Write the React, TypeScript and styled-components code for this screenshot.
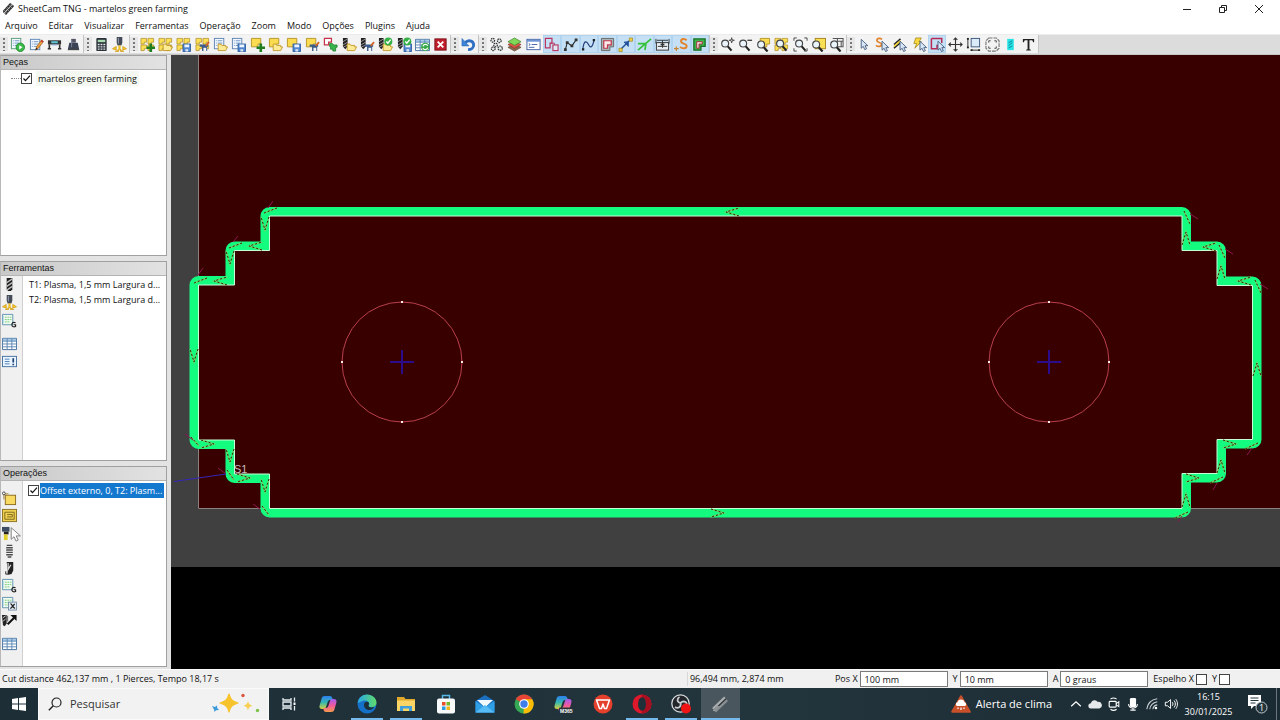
import React from 'react';
import styled, { createGlobalStyle, css } from 'styled-components';

const UI = '"Open Sans", "Noto Sans", sans-serif';

const GlobalStyle = createGlobalStyle`
  *, *::before, *::after { box-sizing: border-box; }
  body { margin: 0; background: #f0f0f0; }
  button, input { font: inherit; color: inherit; margin: 0; padding: 0; border: 0; border-radius: 0; background: none; }
`;

/* ---------- page frame ---------- */

const Page = styled.div`
  min-height: 100vh;
  display: flex;
  flex-direction: column;
  font: 9px/14px ${UI};
  color: #111;
  background: #f0f0f0;
`;

const TitleBar = styled.header`
  height: 18px;
  display: flex;
  align-items: center;
  gap: 4px;
  padding: 0 3px 0 3px;
  background: #fff;
`;

const AppTitle = styled.h1`
  flex: 1;
  margin: 0;
  font: inherit;
`;

const WindowButtons = styled.div`
  display: flex;
`;

const WindowButton = styled.button`
  width: 36px;
  height: 18px;
  display: grid;
  place-items: center;
  svg { width: 10px; height: 10px; }
`;

const MenuBar = styled.nav`
  height: 16px;
  display: flex;
  align-items: center;
  background: #fff;
`;

const MenuItem = styled.button`
  padding: 0 6px 0 5px;
`;

const ToolBar = styled.div`
  height: 21px;
  display: flex;
  padding-bottom: 1px;
  background: #dcdcdc;
  border-top: 1px solid #ececec;
  border-bottom: 1px solid #c8c8c8;
`;

const ToolGroup = styled.div<{ $width: number }>`
  width: ${p => p.$width}px;
  display: flex;
  background: #f3f3f3;
  border-right: 1px solid #c4c4c4;
`;

const Grip = styled.span`
  flex: none;
  width: 8px;
  margin: 2px 0;
  background: radial-gradient(circle at 4px 2px, #777 1px, transparent 1px) 0 0 / 8px 4px #e6e6e6;
`;

const ToolButtons = styled.div`
  flex: 1;
  display: grid;
  grid-auto-flow: column;
  grid-auto-columns: 1fr;
`;

const ToolButton = styled.button<{ $on?: boolean }>`
  position: relative;
  display: grid;
  place-items: center;
  min-width: 0;
  min-height: 0;
  svg { width: 15px; height: 15px; }
  ${p => p.$on && css`background: #c5e0f5; box-shadow: inset 0 0 0 1px #b0d4f0;`}
`;

/* ---------- work area ---------- */

const Main = styled.main`
  flex: 1;
  display: grid;
  grid-template-columns: 167px minmax(0, 1fr);
  gap: 4px;
  background: #e3e3e3;
`;

const Side = styled.aside`
  min-width: 0;
  display: grid;
  grid-template-columns: minmax(0, 1fr);
  grid-template-rows: repeat(3, minmax(0, 1fr));
  gap: 5px;
  padding-bottom: 2px;
`;

const Panel = styled.section`
  display: flex;
  flex-direction: column;
  border: 1px solid #a0a0a0;
  border-left-color: #b8b8b8;
  background: #fff;
`;

const PanelTitle = styled.h2`
  margin: 0;
  padding-left: 2px;
  height: 14px;
  font: 9px/12px "Liberation Sans", Arial, sans-serif;
  color: #111;
  background: linear-gradient(90deg, #c9c9c9, #e2e2e2);
  border-bottom: 1px solid #b4b4b4;
`;

const PanelBody = styled.div`
  flex: 1;
  display: flex;
`;

const Strip = styled.div<{ $top?: number }>`
  flex: none;
  width: 22px;
  padding: ${p => p.$top ?? 0}px 4px 0 0;
  background: #f0f0f0;
  border-right: 1px solid #d0d0d0;
`;

const StripGroup = styled.div<{ $height: number }>`
  height: ${p => p.$height}px;
  display: grid;
  grid-auto-rows: 1fr;
  margin-bottom: 5px;
`;

const List = styled.ul`
  flex: 1;
  min-width: 0;
  margin: 0;
  padding: 1px 2px 0 5px;
  list-style: none;
`;

const ListItem = styled.li`
  height: 15px;
  padding-left: 1px;
  line-height: 15px;
  white-space: nowrap;
`;

const CheckRow = styled.label<{ $indent: number }>`
  display: flex;
  align-items: center;
  height: 15px;
  margin-top: 1px;
  padding-left: ${p => p.$indent}px;
  white-space: nowrap;
`;

const Branch = styled.span`
  width: 10px;
  border-top: 1px dotted #888;
`;

const Check = styled.input.attrs({ type: 'checkbox' })`
  appearance: none;
  flex: none;
  width: 11px;
  height: 11px;
  border: 1px solid #444;
  background: #fff;
`;

const Ticked = styled.span`
  position: relative;
  display: grid;
  svg { position: absolute; inset: 0; width: 11px; height: 11px; pointer-events: none; }
  input:not(:checked) + svg { display: none; }
`;

const RowText = styled.span<{ $selected?: boolean }>`
  height: 15px;
  line-height: 15px;
  padding: 0 2px;
  margin-left: ${p => (p.$selected ? 1 : 4)}px;
  ${p => p.$selected
    ? css`flex: 1; padding: 0; color: #fff; background: #1478cf;`
    : css`background: #f4f8f0;`}
`;

const Pointer = styled.svg`
  position: absolute;
  left: 8px;
  top: 3px;
  z-index: 1;
`;

const Drawing = styled.svg`
  display: block;
  width: 100%;
  height: 100%;
  min-height: 500px;
  background: #000;
`;

const Stage = styled.div`
  display: grid;
  min-width: 0;
  background: #000;
`;

/* ---------- status bar ---------- */

const StatusBar = styled.div`
  height: 19px;
  display: flex;
  align-items: center;
  padding: 0 42px 0 2px;
  border-top: 1px solid #fafafa;
  background: #f0f0f0;
`;

const StatusText = styled.span`
  flex: 1;
`;

const Coordinates = styled.span`
  width: 148px;
  padding-left: 2px;
  border-left: 1px solid #d8d8d8;
`;

const Field = styled.label<{ $gap: number }>`
  display: flex;
  align-items: center;
  gap: 2px;
  margin-right: ${p => p.$gap}px;
`;

const FieldInput = styled.input`
  width: 88px;
  height: 16px;
  padding: 0 4px;
  border: 1px solid #7a7a7a;
  background: #fff;
`;

/* ---------- task bar ---------- */

const TaskBar = styled.footer`
  height: 32px;
  display: flex;
  color: #fff;
  background: linear-gradient(90deg, #1d2e37, #22343c 60%, #1b2b33);
`;

const StartButton = styled.button`
  width: 38px;
  display: grid;
  place-items: center;
`;

const Search = styled.label`
  width: 231px;
  display: flex;
  align-items: center;
  gap: 8px;
  padding: 0 8px 0 9px;
  background: #f2f2f2;
  border: 1px solid #fafafa;
`;

const SearchInput = styled.input`
  flex: 1;
  min-width: 0;
  font: 11px/16px ${UI};
  color: #333;
  outline: none;
  &::placeholder { color: #333; opacity: 1; }
`;

const Apps = styled.div`
  width: 471px;
  display: grid;
  grid-auto-flow: column;
  grid-auto-columns: 1fr;
`;

const AppButton = styled.button<{ $state?: 'open' | 'active' }>`
  display: grid;
  place-items: center;
  svg { width: 20px; height: 20px; }
  ${p => p.$state === 'open' && css`background: linear-gradient(#76b9ed, #76b9ed) center bottom / 32px 2px no-repeat;`}
  ${p => p.$state === 'active' && css`background: linear-gradient(#76b9ed, #76b9ed) center bottom / 100% 2px no-repeat #49565d;`}
`;

const Tray = styled.div`
  margin-left: auto;
  display: flex;
  align-items: center;
  padding-right: 3px;
`;

const Weather = styled.button`
  display: flex;
  align-items: center;
  gap: 5px;
  margin-right: 14px;
  font: 11px/16px ${UI};
  white-space: nowrap;
`;

const TrayButton = styled.button`
  width: 19px;
  height: 32px;
  display: grid;
  place-items: center;
  svg { width: 14px; height: 14px; }
`;

const Clock = styled.time`
  width: 57px;
  text-align: center;
  font: 9px/15px ${UI};
`;

const Notices = styled.button`
  width: 40px;
  height: 32px;
  display: grid;
  place-items: center;
  border-right: 1px solid #6a767c;
`;

/* ---------- icon pieces, on a 16 x 16 grid ---------- */

const Icon = ({ children }: { children: React.ReactNode }) => (
  <svg viewBox="0 0 16 16" fill="none" aria-hidden="true">{children}</svg>
);

const Sheet = ({ x = 1, y = 1, c = '#5f86b5' }) => (
  <g transform={`translate(${x} ${y})`}>
    <rect x=".5" y=".5" width="10" height="11" fill="#f4f9ff" stroke={c} />
    <path d="M2 3h1M4 3h5M2 5.500h1M4 5.500h5M2 8h1M4 8h5" stroke="#6c94c4" />
  </g>
);
const Part = ({ x = 1, y = 1 }) => (
  <path transform={`translate(${x} ${y})`} d="M.5.5h10v6h-3v3h-7z" fill="#fbdc50" stroke="#b08c1c" strokeWidth=".9" />
);
const Nest = () => (
  <g fill="#fbdf55" stroke="#a8841c" strokeWidth=".7">
    <path d="M1 1.500h6v4h-2.500v2h-3.500zM8.500 1.500h6v4h-2.500v2h-3.500zM1 8.500h6v4h-2.500v2h-3.500zM8.500 8.500h6v4h-2.500v2h-3.500z" />
  </g>
);
const Folder = () => <path d="M5.500 14.500v-7h3l1 1.500h4v1.500h2l-2 4z" fill="#fdea94" stroke="#c0921e" strokeWidth=".9" />;
const Disk = () => (
  <g><rect x="7.500" y="7.500" width="8" height="8" fill="#4f86cf" stroke="#2a5a9f" strokeWidth=".9" /><path d="M9 8h5v3H9z" fill="#eef5ff" /><path d="M10 13h3v2.500h-3z" fill="#dbe5f2" /></g>
);
const Pencil = () => (
  <g><path d="M7 14l1-3.500L13.500 3l2 1.700L10 12z" fill="#f0a03c" stroke="#8d5a24" strokeWidth=".7" /><path d="M7 14l.7-2.500 1.500 1.200z" fill="#222" /><path d="M12.800 3.800l2 1.700" stroke="#c33" strokeWidth="1.500" /></g>
);
const Dark = () => (
  <g><path d="M5 8h9v2.500H5zM7.500 10h5.500v5H7.500z" fill="#3b5c8a" /><path d="M9 11.500h3V15H9z" fill="#f2f4f8" /><path d="M11.500 9.500l3.500-4" stroke="#d4662a" strokeWidth="2" /></g>
);
const Plus = () => <path d="M11.500 7v9M7 11.500h9" stroke="#1f7d1f" strokeWidth="2.800" />;
const Tick = () => (
  <g><circle cx="11" cy="4.800" r="4.300" fill="#35b045" /><path d="M8.800 4.800l1.700 1.700L13.500 2.800" stroke="#fff" strokeWidth="1.500" /></g>
);
const Drill = ({ x = 1 }) => (
  <g transform={`translate(${x} 0)`}><path d="M0 1h5v9l-2.500 3L0 10z" fill="#222" /><path d="M0 5l5-3M0 8.500l5-3M0 11l5-2.500" stroke="#b8b8b8" strokeWidth=".8" /></g>
);
const Arrow = ({ x = 6, y = 4, fill = '#d9e6f7' }) => (
  <path transform={`translate(${x} ${y})`} d="M.5.5v9.500l2.200-2 1.600 3.500 1.900-.9-1.600-3.300h3z" fill={fill} stroke="#3c5678" strokeWidth=".9" />
);
const Lens = ({ x = 0, y = 0 }) => (
  <g transform={`translate(${x} ${y})`}><circle cx="5.500" cy="6" r="3.700" fill="#eaf4fb" stroke="#444" strokeWidth="1.200" /><path d="M8.300 9l4 4.500" stroke="#222" strokeWidth="2.300" /></g>
);
const Grid = () => (
  <g><path d="M.5 2.500h15v12H.5z" fill="#fff" stroke="#44709f" /><path d="M1 3h14v2.500H1z" fill="#a9cbea" /><path d="M.5 5.500h15M.5 8.500h15M.5 11.500h15M5.500 2.500v12M10.500 2.500v12" stroke="#5b86b3" /></g>
);
const Code = () => (
  <g><path d="M.5 1.500h11v11H.5z" fill="#eefbee" stroke="#5f93b0" /><path d="M3 4.500h7M3 7h7M3 9.500h5" stroke="#7cc97f" strokeDasharray="2 .8" /><path d="M1 3v8" stroke="#7cb0d6" /></g>
);

const icons: Record<string, React.ReactNode> = {
  run: <><Sheet x={1} y={1} c="#5b9d78" /><circle cx="11" cy="11" r="4.500" fill="#3dbb4a" stroke="#248c34" /><path d="M9.800 8.800l3.500 2.200-3.500 2.200z" fill="#fff" /></>,
  edit: <><Sheet x={1} y={2} /><Pencil /></>,
  machine: <><path d="M1 3.500h14v4.500H1z" fill="#333" /><path d="M4.500 4.500h7v2.200h-7z" fill="#5bc6d8" /><path d="M2.500 8v4.500M13.500 8v4.500M.8 12.500h3.500M11.700 12.500h3.500" stroke="#333" strokeWidth="1.700" /><path d="M5 8.500h6" stroke="#8ad" /></>,
  post: <><path d="M5.500 2h5v4h-5z" fill="#556" /><path d="M3.500 6h9l1.500 7h-12z" fill="#3a4254" /><path d="M6 3v8" stroke="#7c88a0" /><path d="M2 13.500h12" stroke="#222" /></>,
  calc: <><rect x="2.500" y="1" width="11" height="14" rx="1" fill="#2b3138" /><path d="M4 3h8v2.500H4z" fill="#a8dcb0" /><path d="M4 8h2M7 8h2M10 8h2M4 10.500h2M7 10.500h2M10 10.500h2M4 13h2M7 13h2M10 13h2" stroke="#dfe4e8" strokeWidth="1.400" /></>,
  torch: <><path d="M5 0h6v6l-1 3H6L5 6z" fill="#444b58" /><path d="M6.800 1v6" stroke="#9aa3b2" /><path d="M6.800 9h2.400v5H6.800z" fill="#f0c020" /><path d="M.5 12.500l4-2.500v4zM15.500 12.500l-4-2.500v4zM3.500 15.500l3.500-2v2zM12.500 15.500l-3.500-2v2z" fill="#f5c62a" stroke="#d09c18" strokeWidth=".8" /></>,
  nestAdd: <><Nest /><Plus /></>,
  nestOpen: <><Nest /><Folder /></>,
  nestSave: <><Nest /><Disk /></>,
  nestEdit: <><Nest /><Dark /></>,
  listOpen: <><Sheet /><Folder /></>,
  listSave: <><Sheet /><Disk /></>,
  partAdd: <><Part /><Plus /></>,
  partOpen: <><Part /><Folder /></>,
  partSave: <><Part /><Disk /></>,
  partEdit: <><Part /><Dark /></>,
  partImport: <><path d="M1 1.500h8v4H6v3H1.500v-7" fill="#fff" stroke="#c5324a" strokeWidth="1.300" /><path d="M7 7h3l1.500 1.500H15V11h-1.500v4h-3v-2H8v-3H7z" fill="#38b54a" stroke="#1d7f2c" strokeWidth=".8" /></>,
  toolOpen: <><Drill /><Folder /></>,
  toolEdit: <><Drill /><Dark /></>,
  toolCheckOpen: <><Drill /><Folder /><Tick /></>,
  toolCheckSave: <><Drill /><Disk /><Tick /></>,
  refresh: <><Grid /><circle cx="11" cy="10.500" r="4.500" fill="#35a845" /><path d="M8.500 10a2.600 2.600 0 015-.5M13.500 11.300a2.600 2.600 0 01-5 .5" stroke="#fff" strokeWidth="1.200" /></>,
  remove: <><rect x="2" y="2" width="12" height="12" fill="#c01f2b" stroke="#7c1018" /><path d="M5 5l6 6M11 5l-6 6" stroke="#fff" strokeWidth="2" /></>,
  undo: <><path d="M4 5.500h1C9 2.500 13.500 4.500 13.500 8.500c0 3-2.500 5-6 5" stroke="#2e6fc4" strokeWidth="3" /><path d="M1 1.500v8h7.500z" fill="#3f83d6" stroke="#2765b8" strokeWidth=".6" /></>,
  gears: <g stroke="#333" strokeWidth="1.300" fill="#dfe6ea"><circle cx="4" cy="3.500" r="2" strokeDasharray="1.500 .7" /><circle cx="11" cy="4" r="2" strokeDasharray="1.500 .7" /><circle cx="7" cy="8.500" r="2" strokeDasharray="1.500 .7" /><circle cx="4.500" cy="12.500" r="2" strokeDasharray="1.500 .7" /><circle cx="12" cy="12" r="2.300" strokeDasharray="1.500 .7" /></g>,
  layers: <><path d="M1 11l7-3 7 3-7 4z" fill="#8a6a4a" stroke="#54402c" strokeWidth=".7" /><path d="M1 8l7-3 7 3-7 4z" fill="#e0574a" stroke="#8d2d24" strokeWidth=".7" /><path d="M1 5l7-4 7 4-7 4z" fill="#7fd956" stroke="#377b22" strokeWidth=".7" /></>,
  console: <><rect x="1" y="2.500" width="14" height="11" fill="#fff" stroke="#3e62a5" /><path d="M1 4h14" stroke="#6d94d4" strokeWidth="2" /><path d="M3 7l1.500 1L3 9M6 8h6M3 11h6" stroke="#3e62a5" /></>,
  shapes: <><path d="M1.500 1.500h7v5h-2v5h-5z" stroke="#b9355f" strokeWidth="1.300" /><path d="M7 6.500h4V9" stroke="#b9355f" /><rect x="9.500" y="8.500" width="5.500" height="6" fill="#dfe9f6" stroke="#b9355f" strokeWidth="1.200" /></>,
  nodes: <><path d="M2.500 13.500L4.500 6l5 3.500L14 3" stroke="#222" strokeWidth="1.100" /><path d="M1 12h3v3H1zM3 4.500h3v3H3zM8 8h3v3H8zM12.500 1.500h3v3h-3z" fill="#333" /></>,
  curve: <><path d="M2 13C3 3 6 4 8 8s4 4 6-5" stroke="#24407c" strokeWidth="1.300" /><path d="M1 12h2.500v2.500H1zM12.500 2H15v2.500h-2.500z" fill="#222" /></>,
  outline: <><path d="M1.500 1.500h13v9h-4v4h-9z" fill="#a6b4b4" stroke="#666" /><path d="M4 4h8v4.500H8V12H4z" fill="#fbe9ec" stroke="#c1374c" strokeWidth="1.300" /></>,
  vector: <><path d="M3 13L12 4" stroke="#24539a" strokeWidth="1.600" /><path d="M6.500 5.500L11 10V5z" fill="#24539a" stroke="#24539a" /><path d="M1 12h3.500v3.500H1zM12 1h3.500v3.500H12z" fill="#f2cf3f" stroke="#8d7416" strokeWidth=".6" /></>,
  ray: <path d="M1 14L15 2M1 7h8.500l-1 7" stroke="#35c23a" strokeWidth="1.800" />,
  dims: <><rect x="1.500" y="6" width="13" height="8" fill="#e8eef4" stroke="#333" /><path d="M1 2v5M15 2v5M2 3.500h12M3 10h10M8 3.500v8" stroke="#333" /><path d="M6 7h4v2H6z" fill="#333" /></>,
  start: <><path d="M13.500 3.500C11 1 7.500 2 7.500 4.500c0 3 6 2 6 5 0 3-4.500 3.500-7 1" stroke="#e2842c" strokeWidth="2.100" /><path d="M0 12.500h5M2.500 10v5" stroke="#c98432" strokeWidth="1.300" /></>,
  kerf: <><path d="M2 2h12v8H9.500v4H2z" fill="#3db54a" stroke="#156f22" strokeWidth="1.400" /><path d="M5 5h6v2.500H7.500V12H5z" fill="#f6dfe0" stroke="#a32c3c" /></>,
  zoomIn: <><Lens y={1} /><path d="M12.500 .5v6M9.500 3.500h6" stroke="#333" strokeWidth="1.100" /><path d="M11.500 2.500h2v2h-2z" fill="#fff" stroke="#333" strokeWidth=".7" /></>,
  zoomOut: <><Lens y={1} /><path d="M10 3.500h5" stroke="#333" strokeWidth="1.300" /></>,
  zoomPart: <><Part x={4} y={1} /><Lens y={2} /></>,
  zoomNest: <><Nest /><Lens x={1} y={1} /></>,
  zoomFit: <><Lens x={1} y={1} /><path d="M1 4V1h3M12 1h3v3M1 12v3h3M15 12v3h-3" stroke="#444" /></>,
  zoomSheet: <><rect x="4.500" y="1.500" width="11" height="11" fill="#f9df55" stroke="#a5851c" /><Lens y={2} /></>,
  zoomMachine: <><path d="M4 1.500h11v9H9M4 4.500h11M9 1v5M13 5v6" stroke="#555" strokeWidth="1.100" /><Lens y={2} /></>,
  select: <Arrow x={4} y={2} />,
  selectStart: <><path d="M7.500 2.500C5 .5 2 1.500 2 3.800c0 2.500 5 1.700 5 4.200 0 2.400-4 2.600-6 .9" stroke="#e2842c" strokeWidth="1.900" /><Arrow x={7} y={4} /></>,
  selectPath: <><path d="M1 8l7-6M1 12l7-6" stroke="#222" strokeWidth="1.600" /><path d="M1 10l7-6" stroke="#f1d32d" strokeWidth="1.600" /><Arrow x={7} y={4} /></>,
  selectRapid: <><path d="M4 1h6L7.500 5H10l-7 7 2-5H2z" fill="#f7d93d" stroke="#a3841a" strokeWidth=".8" /><Arrow x={8} y={4} /></>,
  selectContour: <><path d="M1.500 1.500h11v5M1.500 1.500v11h6V9H9" stroke="#b62a55" strokeWidth="1.600" /><Arrow x={8} y={4} /></>,
  move: <path d="M8 1v14M1 8h14M6 3l2-2 2 2M6 13l2 2 2-2M3 6L1 8l2 2M13 6l2 2-2 2" stroke="#333" strokeWidth="1.200" />,
  scale: <><rect x="5.500" y="1.500" width="9" height="9" fill="#dcebfa" stroke="#3c587e" /><path d="M2 1v11M5 14h9" stroke="#222" /><path d="M1 1h2v2H1zM1 10h2v2H1zM5 13h2v2H5zM13 13h2v2h-2z" fill="#222" /></>,
  clamp: <><path d="M4 1h8l3 3v8l-3 3H4l-3-3V4z" stroke="#777" strokeWidth="1.200" strokeDasharray="4 1" /><path d="M4 6V4h2M10 4h2v2M12 10v2h-2M6 12H4v-2" stroke="#444" /></>,
  highlight: <><path d="M4.500 2h7v12h-7z" fill="#27e5e5" /><path d="M6 6l4-2M6 9l4-3M6 11.500l4-2" stroke="#0c7f95" /></>,
  text: <path d="M2 2h12v3.500h-1L12 3.500H9V13l1.500.5v1h-5v-1L7 13V3.500H4L3 5.500H2z" fill="#222" />,
  mill: <><path d="M5 1h6v12l-1.500 2h-3L5 13z" fill="#1f1f1f" /><path d="M5 6l6-4M5 10l6-4M5 14l6-4" stroke="#bfbfbf" strokeWidth="1.400" /></>,
  code: <><Code /><path d="M14.500 10.500c-3-1.500-4 .5-4 2s1.500 3 4 2v-2h-2" stroke="#222" strokeWidth="1.200" /></>,
  table: <Grid />,
  notes: <><rect x=".5" y="2.500" width="15" height="11" fill="#e9f4ff" stroke="#44709f" /><path d="M3 5.500h5M3 8h5M3 10.500h5" stroke="#4d7fb5" /><path d="M12 4.500v4.500M12 10.500v1.500" stroke="#1c3d72" strokeWidth="1.800" /></>,
  contour: <><rect x="3.500" y="4.500" width="11" height="10" fill="#f8da62" stroke="#8a6a1e" /><path d="M2 3v6M2 3h5" stroke="#a08030" /><circle cx="2" cy="2.500" r="1.500" fill="#fff" stroke="#444" /></>,
  pocket: <><rect x=".5" y="1.500" width="15" height="13" fill="#f0d050" stroke="#8b7323" /><path d="M3 4.500h10v7.500H3V4.500M5.500 7h5.500v2.500H5.500" stroke="#7c6720" strokeWidth="1" /></>,
  plasma: <><path d="M0 1h8v5H0z" fill="#3d4c63" /><path d="M2 6h5v3H2z" fill="#222" /><path d="M2 9h4v6H2z" fill="#e5cf2a" /></>,
  thread: <path d="M5 2.500h6M4.500 5h7M4.500 7.500h7M4.500 10h7M4.500 12.500h7M6 15h4" stroke="#4a4a4a" strokeWidth="1.500" />,
  bore: <><path d="M5 1h7v9l-2 4H6V10z" fill="#222" /><path d="M6.500 2v7l3-5" stroke="#ddd" strokeWidth="1.300" /><path d="M4 11v3h4" stroke="#222" /></>,
  variable: <><Code /><rect x="7" y="6.500" width="8.500" height="8.500" fill="#e4edf6" stroke="#5f7a94" strokeWidth=".8" /><path d="M9 8.500c2-.5 2.500 5 5 4.500M13.500 8.500L9 13.500" stroke="#222" strokeWidth="1.300" /></>,
  toolMove: <><path d="M0 2h5v9l-2 3-2-1z" fill="#222" /><path d="M1 5l3-2M1 9l3-3" stroke="#ddd" /><path d="M6 12l7-7" stroke="#111" strokeWidth="2.200" /><path d="M9 2h6.500v6.500z" fill="#111" /><path d="M6 3v6" stroke="#555" /></>,
};

type Tool = [icon: string, label: string, on?: boolean];

const toolGroups: { width: number; tools: Tool[] }[] = [
  { width: 84, tools: [['run', 'Executar'], ['edit', 'Editar código'], ['machine', 'Máquina'], ['post', 'Pós-processador']] },
  { width: 46, tools: [['calc', 'Calculadora'], ['torch', 'Tocha']] },
  { width: 321, tools: [
    ['nestAdd', 'Novo trabalho'], ['nestOpen', 'Abrir trabalho'], ['nestSave', 'Salvar trabalho'], ['nestEdit', 'Salvar trabalho como'],
    ['listOpen', 'Abrir operações'], ['listSave', 'Salvar operações'], ['partAdd', 'Nova peça'], ['partOpen', 'Abrir peça'],
    ['partSave', 'Salvar peça'], ['partEdit', 'Salvar peça como'], ['partImport', 'Importar desenho'], ['toolOpen', 'Abrir ferramentas'],
    ['toolEdit', 'Salvar ferramentas'], ['toolCheckOpen', 'Abrir conjunto'], ['toolCheckSave', 'Salvar conjunto'], ['refresh', 'Atualizar'], ['remove', 'Excluir'],
  ] },
  { width: 28, tools: [['undo', 'Desfazer']] },
  { width: 231, tools: [
    ['gears', 'Opções'], ['layers', 'Camadas'], ['console', 'Console'], ['shapes', 'Mostrar peças', true], ['nodes', 'Mostrar nós', true],
    ['curve', 'Mostrar curvas', true], ['outline', 'Mostrar contorno', true], ['vector', 'Mostrar segmentos', true], ['ray', 'Mostrar direção', true],
    ['dims', 'Mostrar máquina', true], ['start', 'Mostrar inícios', true], ['kerf', 'Mostrar largura de corte', true],
  ] },
  { width: 137, tools: [['zoomIn', 'Aproximar'], ['zoomOut', 'Afastar'], ['zoomPart', 'Zoom na peça'], ['zoomNest', 'Zoom no trabalho'], ['zoomFit', 'Ajustar'], ['zoomSheet', 'Zoom no material'], ['zoomMachine', 'Zoom na máquina']] },
  { width: 192, tools: [['select', 'Selecionar'], ['selectStart', 'Ponto inicial'], ['selectPath', 'Editar caminho'], ['selectRapid', 'Editar rápidos'], ['selectContour', 'Editar contornos', true], ['move', 'Mover'], ['scale', 'Escalar'], ['clamp', 'Grampos'], ['highlight', 'Realçar'], ['text', 'Texto']] },
];

const menus = ['Arquivo', 'Editar', 'Visualizar', 'Ferramentas', 'Operação', 'Zoom', 'Modo', 'Opções', 'Plugins', 'Ajuda'];

const Tools = ({ items }: { items: Tool[] }) => (
  <>
    {items.map(([icon, label, on]) => (
      <ToolButton key={icon + label} aria-label={label} aria-pressed={on} $on={on}>
        <Icon>{icons[icon]}</Icon>
        {icon === 'plasma' && (
          <Pointer viewBox="0 0 12 15" aria-hidden="true">
            <path d="M.7.7v11.600l2.800-2.600 2 4.400 2.200-1-2-4.200h4.200z" fill="#fff" stroke="#777" strokeWidth=".9" />
          </Pointer>
        )}
      </ToolButton>
    ))}
  </>
);

const TickBox = () => (
  <Ticked>
    <Check defaultChecked />
    <svg viewBox="0 0 11 11" fill="none" aria-hidden="true"><path d="M2.500 5.500l2 2.200L9 2.700" stroke="#111" strokeWidth="1.200" /></svg>
  </Ticked>
);

/* ---------- cutting view ---------- */

const OUTLINE =
  'M269.500 216V250.500H234.500V285H198.500V440H234.500V474H269.500V508.500H1182V473.500H1217V439.500H1252.500V285.500H1217V250.500H1182V216Z';

/* travel arrows: tip position and heading in degrees (0 = right) */
const arrows: [number, number, number][] = [
  [726, 212, 180], [249, 246, 180], [214, 281, 180], [265, 230, 90], [230, 264, 90], [194, 362, 90],
  [214, 444, 0], [250, 478, 0], [724, 513, 0], [230, 462, 90], [265, 492, 90],
  [1186, 232, -90], [1203, 247, 180], [1221, 266, -90], [1238, 281, 180], [1257, 363, -90],
  [1236, 444, 0], [1221, 460, -90], [1199, 478, 0], [1186, 494, -90],
];

/* short dashes that follow the rounding of each outer corner */
const cornerDashes = [
  'M264 213l13-5', 'M229 248l13-5', 'M194 283l13-5', 'M1184 211l6 13', 'M1219 245l6 13', 'M1255 280l6 13',
  'M1258 443l-13 6', 'M1223 477l-13 6', 'M1188 512l-13 6', 'M191 437l8 9', 'M227 470l7 10', 'M262 506l7 9',
];

/* lead ticks at the outer corners */
const ticks = [
  'M268 208l5-7', 'M233 242l5-6', 'M198 275l5-7', 'M1190 214l8 5', 'M1225 249l8 5', 'M1260 284l8 5',
  'M1252 448l-5 7', 'M1217 483l-4 7', 'M1182 516l-4 6', 'M193 440l-8-6', 'M226 474l-8-6', 'M260 509l-7-5',
];

const CutView = () => (
  <Drawing viewBox="171 55 1109 614" preserveAspectRatio="xMinYMin slice" role="img" aria-label="Caminho de corte">
    <rect x="171" y="55" width="1109" height="512" fill="#404040" />
    <rect x="198" y="55" width="1082" height="454" fill="#390000" />
    <path d="M198.500 55V508.500H1280" fill="none" stroke="#8c8080" />
    <path d={OUTLINE} fill="#390000" stroke="#14fc80" strokeWidth="18" strokeLinejoin="round" />
    <path d={OUTLINE} fill="#390000" stroke="#c8ffd8" />
    <g fill="none" stroke="#b4b048" strokeWidth="1.400">
      {arrows.map(([x, y, a]) => <path key={`${x}-${y}`} transform={`translate(${x} ${y}) rotate(${a})`} d="M-13-4L0 0-13 4" opacity=".6" />)}
      <path d={cornerDashes.join('')} opacity=".6" />
    </g>
    <g fill="none" stroke="#2a2a14" strokeDasharray="2 2">
      {arrows.map(([x, y, a]) => <path key={`${x}-${y}`} transform={`translate(${x} ${y}) rotate(${a})`} d="M-13-4L0 0-13 4" />)}
      <path d={cornerDashes.join('')} />
    </g>
    <path d={ticks.join('')} fill="none" stroke="#8c1450" />
    <path d="M174 481.500L226 474" stroke="#3326b8" />
    <text x="234" y="473" fontFamily="Liberation Sans, Arial, sans-serif" fontSize="11" fill="#c9bcbc">S1</text>
    {[402, 1049].map(cx => (
      <g key={cx}>
        <circle cx={cx} cy="362" r="60" fill="none" stroke="#b8404c" />
        <path d={`M${cx - 12} 362h24M${cx} 350v24`} stroke="#2a0c8c" strokeWidth="2" />
        <path d={`M${cx - 61} 361h2v2h-2zM${cx + 59} 361h2v2h-2zM${cx - 1} 301h2v2h-2zM${cx - 1} 421h2v2h-2z`} fill="#ffe8e8" />
      </g>
    ))}
  </Drawing>
);

/* ---------- task bar logos, on a 20 x 20 grid ---------- */

const Logo = ({ children }: { children: React.ReactNode }) => (
  <svg viewBox="0 0 20 20" fill="none" aria-hidden="true">{children}</svg>
);

const Bits = () => (
  <g>
    <path d="M3 15L15 3.500" stroke="#a9adb0" strokeWidth="2.600" />
    <path d="M5 17.500L17 6" stroke="#8b9094" strokeWidth="2.600" />
    <path d="M4 16.200L16 4.700" stroke="#33393d" strokeWidth="1.300" />
    <path d="M3.500 17l5-5" stroke="#e8e8e8" />
  </g>
);

const Copilot = () => (
  <g>
    <path d="M7 2h5c1.500 0 2 1 2.400 2.300L15 6h-3c-1.500 0-2 1-2.500 2.500L8 13c-.5 1.500-1 2-2.500 2H4c-2 0-3-1.500-2.400-3.500l2-7C4.200 2.700 5 2 7 2z" fill="url(#copA)" />
    <path d="M13 18H8c-1.500 0-2-1-2.400-2.300L5 14h3c1.500 0 2-1 2.500-2.500L12 7c.5-1.500 1-2 2.500-2H16c2 0 3 1.500 2.400 3.500l-2 7c-.6 1.800-1.400 2.500-3.400 2.500z" fill="url(#copB)" />
  </g>
);

const apps: { name: string; state?: 'open' | 'active'; logo: React.ReactNode }[] = [
  { name: 'Visão de tarefas', logo: <><path d="M4 4v2h8V4M4 16v-2h8v2M4 8h8v4H4zM15.500 3.500v4M15.500 12v4.500" stroke="#e8eef2" strokeWidth="1.300" /><path d="M14.500 8.500h2v2.500h-2z" fill="#fff" /></> },
  { name: 'Copilot', logo: <><defs>
    <linearGradient id="copA" x1="0" y1="0" x2="0" y2="1"><stop stopColor="#2d7ff0" /><stop offset=".5" stopColor="#35b8b0" /><stop offset="1" stopColor="#d8d23c" /></linearGradient>
    <linearGradient id="copB" x1="0" y1="0" x2="0" y2="1"><stop stopColor="#a45bf0" /><stop offset=".5" stopColor="#f05a9c" /><stop offset="1" stopColor="#f79a4a" /></linearGradient>
  </defs><Copilot /></> },
  { name: 'Edge', state: 'open', logo: <><defs><linearGradient id="edge" x1="0" y1="0" x2="1" y2="0"><stop stopColor="#2aa7e8" /><stop offset="1" stopColor="#5fdc68" /></linearGradient></defs>
    <circle cx="10" cy="10" r="9.500" fill="#1470c8" />
    <path d="M.6 9C1.500 3.500 5.500.5 10 .5c5.500 0 9.500 4 9.500 8 0 3-2.200 4.700-4.800 4.700-2 0-3.200-.7-3-1.500C12.300 11 12.500 10 12 9c-1-2.200-4-3-6.500-2C3 7.800 1.500 9 .6 9z" fill="url(#edge)" />
    <path d="M7 11c0-2 1.500-3.200 3-3.200 1.300 0 2 .8 2 1.800 0 1.200-.8 1.500-.5 2.400.4 1.200 2.500 2 5.500.8-.6 2-2.500 3.200-4.800 3.200C9 16 7 13.500 7 11z" fill="#1d3038" /></> },
  { name: 'Explorador de arquivos', state: 'open', logo: <><path d="M1 3h7l1.500 2H19v12H1z" fill="#e0a92c" /><path d="M1 6.500h18V17H1z" fill="#fad565" /><path d="M4 17v-5h12v5h-3v-2.500H7V17z" fill="#3f9fdc" /></> },
  { name: 'Microsoft Store', logo: <><path d="M6.500 5V1.500h7V5" stroke="#55b8e8" strokeWidth="1.500" /><rect x="1" y="4.500" width="18" height="15" rx="2" fill="#f7f9fa" /><path d="M6 8h3.500v3.500H6z" fill="#e8502c" /><path d="M10.500 8H14v3.500h-3.500z" fill="#74b82c" /><path d="M6 12.500h3.500V16H6z" fill="#2a9be0" /><path d="M10.500 12.500H14V16h-3.500z" fill="#f5b61c" /></> },
  { name: 'E-mail', logo: <><path d="M.5 7L10 1l9.500 6v11.500H.5z" fill="#1a6fc0" /><path d="M2 6h16L10 13.500z" fill="#f2f9fd" /><path d="M.5 7l9.500 6.500L19.500 7v11.500H.5z" fill="#2f9fe6" /><path d="M.5 18.500L10 11l9.500 7.500z" fill="#58bcf4" /></> },
  { name: 'Chrome', logo: <><circle cx="10" cy="10" r="9.500" fill="#35a853" /><path d="M10 10L1.800 5.200A9.500 9.500 0 0118.200 5.200z" fill="#e94335" /><path d="M10 10V5.200h8.300a9.500 9.500 0 01-8.800 14.300z" fill="#fabc05" /><circle cx="10" cy="10" r="4.800" fill="#fff" /><circle cx="10" cy="10" r="3.700" fill="#3f7de8" /></> },
  { name: 'Microsoft 365', logo: <><Copilot /><rect x="6" y="13.500" width="14" height="6" rx="1" fill="#2a2f38" /><text x="7" y="18.500" fontFamily="Liberation Sans, Arial, sans-serif" fontWeight="700" fontSize="5" fill="#fff">M365</text></> },
  { name: 'WPS Office', logo: <><circle cx="10" cy="10" r="9.500" fill="#e5402c" /><path d="M3.500 6h13l-3 8.500h-2L10 10l-1.500 4.500h-2z" stroke="#fff" strokeWidth="1.500" strokeLinejoin="round" /></> },
  { name: 'Opera', state: 'open', logo: <><circle cx="10" cy="10" r="9.500" fill="#e0182c" /><path d="M10 .5a9.500 9.500 0 010 19z" fill="#a81020" /><ellipse cx="10" cy="10" rx="4" ry="6.800" fill="#1f3038" /></> },
  { name: 'OBS Studio', state: 'open', logo: <><circle cx="9.500" cy="9.500" r="8.700" fill="#22262a" stroke="#d9dde0" strokeWidth="1.300" /><path d="M9.500 9C5.500 8 6 4.500 8.500 3M9.500 9c3-3 6-1 6.500 1.500M9.500 9c1 4-2.500 6-5.500 4" stroke="#c8ccd0" strokeWidth="1.800" /><circle cx="15" cy="14.500" r="5" fill="#f01414" /></> },
  { name: 'SheetCam TNG', state: 'active', logo: <Bits /> },
];

const trayIcons: { name: string; art: React.ReactNode }[] = [
  { name: 'Mostrar ícones ocultos', art: <path d="M2.500 10.500L8 5.500l5.500 5" stroke="#fff" strokeWidth="1.400" /> },
  { name: 'OneDrive', art: <path d="M3.500 13a3 3 0 01-.3-6 4.500 4.500 0 018-1.300A3.700 3.700 0 0113 13z" fill="#e6e9eb" /> },
  { name: 'Reunir agora', art: <><rect x="2.500" y="5" width="8" height="6.500" rx="1" stroke="#fff" strokeWidth="1.300" /><path d="M10.500 7.500l3-2v5.500l-3-2M4 2.500c2-1.500 5-1.500 7 0M4 14c2 1.500 5 1.500 7 0" stroke="#fff" strokeWidth="1.200" /></> },
  { name: 'Microfone', art: <><rect x="4.500" y="1" width="7" height="10.500" rx="1.500" fill="#fff" /><path d="M3 8c0 6 10 6 10 0M8 12v3M5 15h6" stroke="#fff" strokeWidth="1.200" /></> },
  { name: 'Rede', art: <><path d="M2 14C3 7 7 3 14 2M5.500 14c.5-4.500 3.500-7.500 8.500-8.500M9 14c.3-2.500 2-4.500 5-5" stroke="#c9d0d4" strokeWidth="1.200" /><circle cx="12.500" cy="12.500" r="1.500" fill="#fff" /></> },
  { name: 'Volume', art: <path d="M1.500 6h2.500l3.500-3v10L4 10H1.500zM9.500 6c1 1.200 1 2.800 0 4M11.500 4c2 2.300 2 5.700 0 8M13.500 2.500c2.500 3.200 2.500 7.800 0 11" stroke="#fff" strokeWidth="1.100" /> },
];

export default function App() {
  return (
    <Page>
      <GlobalStyle />
      <TitleBar>
        <svg width="11" height="14" viewBox="3 3 15 17" fill="none" aria-hidden="true">
          <path d="M3 16L14 4M6 18.500L17 6.500" stroke="#2a2a2a" strokeWidth="3" />
          <path d="M3 16L14 4M6 18.500L17 6.500" stroke="#999" strokeWidth="2" strokeDasharray="1 2" />
        </svg>
        <AppTitle>SheetCam TNG - martelos green farming</AppTitle>
        <WindowButtons>
          <WindowButton aria-label="Minimizar"><svg viewBox="0 0 10 10"><path d="M1 5.500h8" stroke="#222" /></svg></WindowButton>
          <WindowButton aria-label="Restaurar"><svg viewBox="0 0 10 10" fill="none"><path d="M1.500 3.500h5v5h-5zM3.500 3V1.500h5v5H7" stroke="#222" /></svg></WindowButton>
          <WindowButton aria-label="Fechar"><svg viewBox="0 0 10 10"><path d="M1 1l8 8M9 1L1 9" stroke="#222" /></svg></WindowButton>
        </WindowButtons>
      </TitleBar>
      <MenuBar>{menus.map(m => <MenuItem key={m}>{m}</MenuItem>)}</MenuBar>
      <ToolBar role="toolbar">
        {toolGroups.map(g => (
          <ToolGroup key={g.width} $width={g.width}>
            <Grip />
            <ToolButtons><Tools items={g.tools} /></ToolButtons>
          </ToolGroup>
        ))}
      </ToolBar>

      <Main>
        <Side>
          <Panel>
            <PanelTitle>Peças</PanelTitle>
            <CheckRow $indent={10}>
              <Branch />
              <TickBox />
              <RowText>martelos green farming</RowText>
            </CheckRow>
          </Panel>
          <Panel>
            <PanelTitle>Ferramentas</PanelTitle>
            <PanelBody>
              <Strip>
                <StripGroup $height={54}>
                  <Tools items={[['mill', 'Nova fresa'], ['torch', 'Nova tocha'], ['code', 'Novo código']]} />
                </StripGroup>
                <StripGroup $height={36}>
                  <Tools items={[['table', 'Tabela de ferramentas'], ['notes', 'Detalhes']]} />
                </StripGroup>
              </Strip>
              <List>
                <ListItem>T1: Plasma, 1,5 mm Largura d...</ListItem>
                <ListItem>T2: Plasma, 1,5 mm Largura d...</ListItem>
              </List>
            </PanelBody>
          </Panel>
          <Panel>
            <PanelTitle>Operações</PanelTitle>
            <PanelBody>
              <Strip $top={8}>
                <StripGroup $height={140}>
                  <Tools items={[['contour', 'Contorno'], ['pocket', 'Cavidade'], ['plasma', 'Corte a plasma', false], ['thread', 'Rosca'], ['bore', 'Furação'], ['code', 'Código'], ['variable', 'Variável'], ['toolMove', 'Mover ferramenta']]} />
                </StripGroup>
                <StripGroup $height={18}><Tools items={[['table', 'Tabela de operações']]} /></StripGroup>
              </Strip>
              <List>
                <li>
                  <CheckRow $indent={0}>
                    <TickBox />
                    <RowText $selected>Offset externo, 0, T2: Plasm...</RowText>
                  </CheckRow>
                </li>
              </List>
            </PanelBody>
          </Panel>
        </Side>
        <Stage><CutView /></Stage>
      </Main>

      <StatusBar>
        <StatusText>Cut distance 462,137 mm , 1 Pierces, Tempo 18,17 s</StatusText>
        <Coordinates>96,494 mm, 2,874 mm</Coordinates>
        <Field $gap={5}>Pos X<FieldInput defaultValue="100 mm" /></Field>
        <Field $gap={5}>Y<FieldInput defaultValue="10 mm" /></Field>
        <Field $gap={5}>A<FieldInput defaultValue="0 graus" /></Field>
        <Field $gap={5}>Espelho X<Check /></Field>
        <Field $gap={8}>Y<Check /></Field>
      </StatusBar>

      <TaskBar>
        <StartButton aria-label="Iniciar">
          <svg width="14" height="14" viewBox="0 0 14 14"><path d="M0 2l6-1v5.500H0zM7 .9L14 0v6.500H7zM0 7.500h6V13l-6-1zM7 7.500h7V14l-7-1z" fill="#fff" /></svg>
        </StartButton>
        <Search>
          <svg width="14" height="14" viewBox="0 0 14 14" fill="none" aria-hidden="true"><circle cx="8.500" cy="5.500" r="4.500" stroke="#222" strokeWidth="1.200" /><path d="M5.300 8.700L.8 13.200" stroke="#222" strokeWidth="1.400" /></svg>
          <SearchInput placeholder="Pesquisar" aria-label="Pesquisar" />
          <svg width="49" height="22" viewBox="0 0 49 22" aria-hidden="true">
            <path d="M18 1c1.500 5.500 3 7 9 9-6 2-7.500 3.500-9 9-1.500-5.500-3-7-9-9 6-2 7.500-3.500 9-9z" fill="#f7c32c" stroke="#f7c32c" strokeWidth="1.200" strokeLinejoin="round" />
            <path d="M37 8c.8 3 1.500 3.700 4.500 4.700-3 1-3.700 1.700-4.500 4.700-.8-3-1.500-3.700-4.500-4.700 3-1 3.700-1.700 4.500-4.700z" fill="#f7cf52" />
            <path d="M1 13l3 1 2-1.500.2 2.500L8 17l-3 .3L3.500 19 3 16.500z" fill="#3b9ad9" />
            <circle cx="32" cy="2.500" r="1.700" fill="#d9573c" /><circle cx="46.500" cy="17.500" r="1.700" fill="#7cc24a" />
          </svg>
        </Search>
        <Apps>
          {apps.map(a => <AppButton key={a.name} aria-label={a.name} $state={a.state}><Logo>{a.logo}</Logo></AppButton>)}
        </Apps>
        <Tray>
          <Weather>
            <svg width="20" height="18" viewBox="0 0 20 18" fill="none" aria-hidden="true">
              <path d="M10 1.200L18.800 16.800H1.200z" fill="#c8502a" stroke="#c8502a" strokeWidth="2" strokeLinejoin="round" />
              <path d="M6 11a2 2 0 01.5-3.800 3.600 3.600 0 017 0A2 2 0 0114 11z" fill="#fff" /><path d="M7 12.500v1.500M10 12.500V15M13 12.500v1.500" stroke="#fff" strokeWidth="1.200" />
            </svg>
            Alerta de clima
          </Weather>
          {trayIcons.map(t => <TrayButton key={t.name} aria-label={t.name}><Icon>{t.art}</Icon></TrayButton>)}
          <Clock>16:15<br />30/01/2025</Clock>
          <Notices aria-label="Notificações">
            <svg width="22" height="20" viewBox="0 0 22 20" fill="none">
              <path d="M2 1h13v11H8l-3 3v-3H2z" fill="#fff" /><path d="M4.500 4h8M4.500 6.500h8M4.500 9h5" stroke="#22343c" />
              <circle cx="15.500" cy="13.500" r="5.500" fill="#22343c" stroke="#c3cace" />
              <text x="13" y="17" fontFamily="Open Sans, sans-serif" fontSize="9" fill="#fff">1</text>
            </svg>
          </Notices>
        </Tray>
      </TaskBar>
    </Page>
  );
}
